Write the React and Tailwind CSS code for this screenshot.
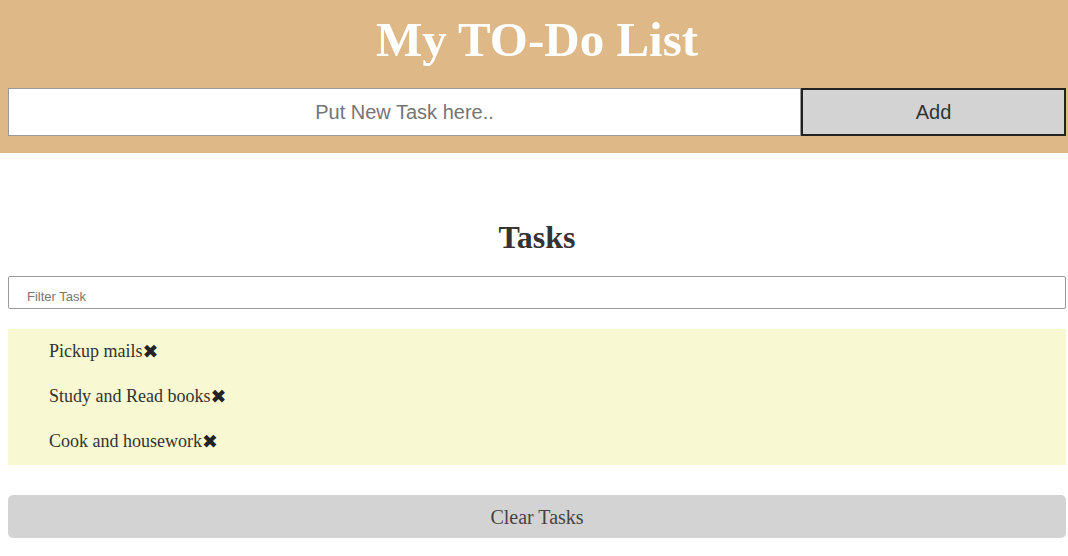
const SERIF = { fontFamily: "'Liberation Serif', 'Times New Roman', serif" };
const SANS = { fontFamily: "'Liberation Sans', Arial, sans-serif" };
const SYM = { fontFamily: "'DejaVu Sans', sans-serif" };

const TASKS = ['Pickup mails', 'Study and Read books', 'Cook and housework'];

export default function App() {
  return (
    <div className="min-h-screen bg-white" style={SERIF}>
      {/* Header */}
      <div className="bg-[#deb887] pl-2 pr-[2px] pb-[17px]">
        <h1 className="text-[49px] font-bold text-white text-center leading-[56px] pt-[12px] pb-[20px]">
          My TO-Do List
        </h1>
        <div className="flex h-[48px]">
          <input
            type="text"
            placeholder="Put New Task here.."
            className="flex-1 bg-white border border-[#999] text-center text-[20px] text-[#333] placeholder-[#757575] outline-none"
            style={SANS}
          />
          <button
            className="w-[265px] bg-[#d3d3d3] border-2 border-[#222] text-[20px] text-[#333]"
            style={SANS}
          >
            Add
          </button>
        </div>
      </div>

      {/* Tasks */}
      <div className="pl-2 pr-[2px]">
        <h2 className="text-[32px] font-bold text-[#333] text-center leading-[40px] mt-[64px] mb-[19px]">Tasks</h2>
        <input
          type="text"
          placeholder="Filter Task"
          className="w-full h-[33px] border border-[#999] rounded-[2px] pl-[18px] pt-[7px] text-[13px] text-[#333] placeholder-[#757575] outline-none"
          style={SANS}
        />
        <ul className="bg-[#f8f8d2] mt-[20px] pl-[41px] pb-[1px]">
          {TASKS.map(t => (
            <li key={t} className="h-[45px] flex items-center text-[18px] text-[#333]">
              {t}
              <span className="text-[#222] text-[19px] leading-none" style={SYM}>✖</span>
            </li>
          ))}
        </ul>
        <button className="w-full h-[43px] mt-[30px] bg-[#d3d3d3] rounded-[5px] text-[20px] text-[#444]" style={SERIF}>
          Clear Tasks
        </button>
      </div>
    </div>
  );
}
